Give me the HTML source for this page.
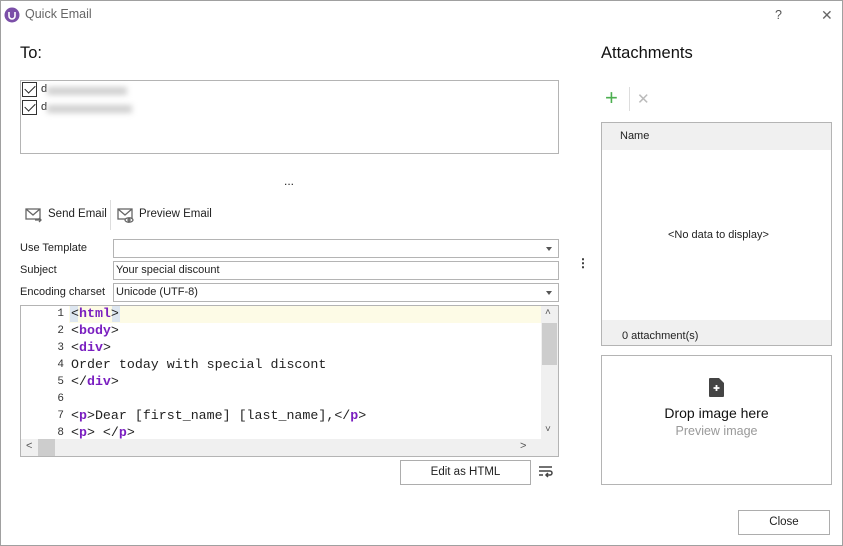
<!DOCTYPE html>
<html><head><style>
*{box-sizing:border-box;margin:0;padding:0}
body{width:843px;height:546px;background:#fff;font-family:"Liberation Sans",sans-serif;font-size:12px;color:#222;position:relative;overflow:hidden}
.frame{position:absolute;left:0;top:0;width:843px;height:546px;border:1px solid #a0a0a0}
.a{position:absolute;white-space:nowrap}
.box{position:absolute;border:1px solid #b4b4b4;background:#fff}
.in{position:absolute;border:1px solid #b4b4b4;background:#fff;height:19px;font-size:11px;padding:2px 0 0 2px}
.dd:after{content:"";position:absolute;right:6px;top:7px;border:3px solid transparent;border-top:4px solid #555}
.lbl{position:absolute;left:20px;font-size:11px}
.code{position:absolute;left:71px;font-family:"Liberation Mono",monospace;font-size:13.3px;color:#222}
.ln{position:absolute;left:50px;width:14px;text-align:right;font-family:"Liberation Mono",monospace;font-size:11px;color:#333}
.t{color:#7a1fc0;font-weight:bold}
.btn{position:absolute;border:1px solid #adadad;background:#fff;text-align:center;font-size:11.5px}
.cb{position:absolute;left:22px;width:15px;height:15px;border:1px solid #333;background:#fff}
.cb:after{content:"";position:absolute;left:4px;top:0px;width:5px;height:9px;border:solid #222;border-width:0 1.6px 1.6px 0;transform:rotate(45deg)}
.blur{position:absolute;background:#d0d0d0;filter:blur(3px);height:8px}
</style></head><body>
<div class="frame"></div>
<svg class="a" style="left:4px;top:7px" width="16" height="16"><circle cx="8" cy="8" r="7.5" fill="#7b4fa8"/><path d="M5 5v4a3 3 0 0 0 6 0V5" stroke="#fff" stroke-width="1.6" fill="none"/></svg>
<div class="a" style="left:25px;top:7px;font-size:12.5px;color:#666">Quick Email</div>
<div class="a" style="left:775px;top:8px;font-size:12.5px;color:#555">?</div>
<div class="a" style="left:821px;top:7px;font-size:14px;color:#666">✕</div>

<div class="a" style="left:20px;top:44px;font-size:16.5px;color:#111">To:</div>
<div class="box" style="left:20px;top:80px;width:539px;height:74px"></div>
<div class="cb" style="top:82px"></div><div class="a" style="left:41px;top:83px;font-size:11px">d</div><div class="blur" style="left:47px;top:87px;width:80px"></div>
<div class="cb" style="top:100px"></div><div class="a" style="left:41px;top:101px;font-size:11px">d</div><div class="blur" style="left:47px;top:105px;width:85px"></div>

<div class="a" style="left:284px;top:174px;font-size:12px">...</div>

<svg class="a" style="left:25px;top:207px" width="18" height="16" fill="none" stroke="#666" stroke-width="1.3"><rect x="1" y="2" width="14" height="10"/><path d="M1 2l7 6 7-6"/><path d="M10 13h6m-2-2l2 2-2 2"/></svg>
<div class="a" style="left:48px;top:208px;font-size:11.5px">Send Email</div>
<div class="a" style="left:110px;top:200px;width:1px;height:30px;background:#ddd"></div>
<svg class="a" style="left:117px;top:207px" width="18" height="16" fill="none" stroke="#666" stroke-width="1.3"><rect x="1" y="2" width="14" height="10"/><path d="M1 2l7 6 7-6"/><ellipse cx="12" cy="13" rx="4" ry="2.2" fill="#fff"/><circle cx="12" cy="13" r="1"/></svg>
<div class="a" style="left:139px;top:208px;font-size:11.5px">Preview Email</div>

<div class="lbl" style="top:242px">Use Template</div>
<div class="in dd" style="left:113px;top:239px;width:446px"></div>
<div class="lbl" style="top:264px">Subject</div>
<div class="in" style="left:113px;top:261px;width:446px">Your special discount</div>
<div class="lbl" style="top:286px">Encoding charset</div>
<div class="in dd" style="left:113px;top:283px;width:446px">Unicode (UTF-8)</div>

<div class="box" style="left:20px;top:305px;width:539px;height:152px;overflow:hidden">
 <div class="a" style="left:48px;top:0;width:472px;height:17px;background:#fdfbe6"></div>
 <div class="a" style="left:520px;top:0;width:17px;height:133px;background:#f0f0f0"></div>
 <div class="a" style="left:521px;top:17px;width:15px;height:42px;background:#cdcdcd"></div>
 <div class="a" style="left:0;top:133px;width:537px;height:17px;background:#f0f0f0"></div>
 <div class="a" style="left:17px;top:133px;width:17px;height:17px;background:#cdcdcd"></div>
 <div class="a" style="left:5px;top:134px;font-size:11px;color:#555">&lt;</div>
 <div class="a" style="left:499px;top:134px;font-size:11px;color:#555">&gt;</div>
 <div class="a" style="left:524px;top:1px;font-size:10px;color:#555">˄</div>
 <div class="a" style="left:524px;top:118px;font-size:10px;color:#555">˅</div>
</div>
<div class="a" style="left:70px;top:306px;width:50px;height:16px;background:#dde6f0"></div>
<div class="a" style="left:78px;top:306px;width:34px;height:16px;background:#fdfbe6"></div>
<div class="ln" style="top:308px">1</div><div class="code" style="top:306px">&lt;<span class="t">html</span>&gt;</div>
<div class="ln" style="top:325px">2</div><div class="code" style="top:323px">&lt;<span class="t">body</span>&gt;</div>
<div class="ln" style="top:342px">3</div><div class="code" style="top:340px">&lt;<span class="t">div</span>&gt;</div>
<div class="ln" style="top:359px">4</div><div class="code" style="top:357px">Order today with special discont</div>
<div class="ln" style="top:376px">5</div><div class="code" style="top:374px">&lt;/<span class="t">div</span>&gt;</div>
<div class="ln" style="top:393px">6</div>
<div class="ln" style="top:410px">7</div><div class="code" style="top:408px">&lt;<span class="t">p</span>&gt;Dear [first_name] [last_name],&lt;/<span class="t">p</span>&gt;</div>
<div class="ln" style="top:427px">8</div><div class="code" style="top:425px">&lt;<span class="t">p</span>&gt; &lt;/<span class="t">p</span>&gt;</div>

<div class="btn" style="left:400px;top:460px;width:131px;height:25px;padding-top:5px">Edit as HTML</div>
<svg class="a" style="left:538px;top:465px" width="15" height="14" stroke="#444" stroke-width="1.5" fill="none"><path d="M1 2h13M1 6h11a2 2 0 0 1 0 4H8m2-2l-2 2 2 2M1 10h4"/></svg>
<div class="a" style="left:577px;top:256px;font-size:12px;font-weight:bold">⋮</div>

<div class="a" style="left:601px;top:44px;font-size:16.5px;color:#111">Attachments</div>
<div class="a" style="left:605px;top:86px;font-size:22px;color:#4caf50;line-height:24px">+</div>
<div class="a" style="left:629px;top:87px;width:1px;height:24px;background:#ddd"></div>
<div class="a" style="left:637px;top:90px;font-size:15px;color:#bbb">✕</div>

<div class="box" style="left:601px;top:122px;width:231px;height:224px;overflow:hidden">
 <div class="a" style="left:0;top:0;width:229px;height:27px;background:#f0f0f0"></div>
 <div class="a" style="left:18px;top:7px;font-size:11px">Name</div>
 <div class="a" style="left:66px;top:106px;font-size:11px">&lt;No data to display&gt;</div>
 <div class="a" style="left:0;top:197px;width:229px;height:25px;background:#f0f0f0"></div>
 <div class="a" style="left:20px;top:207px;font-size:11px">0 attachment(s)</div>
</div>
<div class="box" style="left:601px;top:355px;width:231px;height:130px"></div>
<svg class="a" style="left:709px;top:378px" width="15" height="19"><path d="M0 1a1 1 0 0 1 1-1h9l5 5v13a1 1 0 0 1-1 1H1a1 1 0 0 1-1-1z" fill="#444"/><path d="M7.5 7v6M4.5 10h6" stroke="#fff" stroke-width="1.8"/></svg>
<div class="a" style="left:601px;width:231px;text-align:center;top:405px;font-size:14px;color:#111">Drop image here</div>
<div class="a" style="left:601px;width:231px;text-align:center;top:424px;font-size:12.5px;color:#999">Preview image</div>

<div class="btn" style="left:738px;top:510px;width:92px;height:25px;padding-top:5px">Close</div>
</body></html>
